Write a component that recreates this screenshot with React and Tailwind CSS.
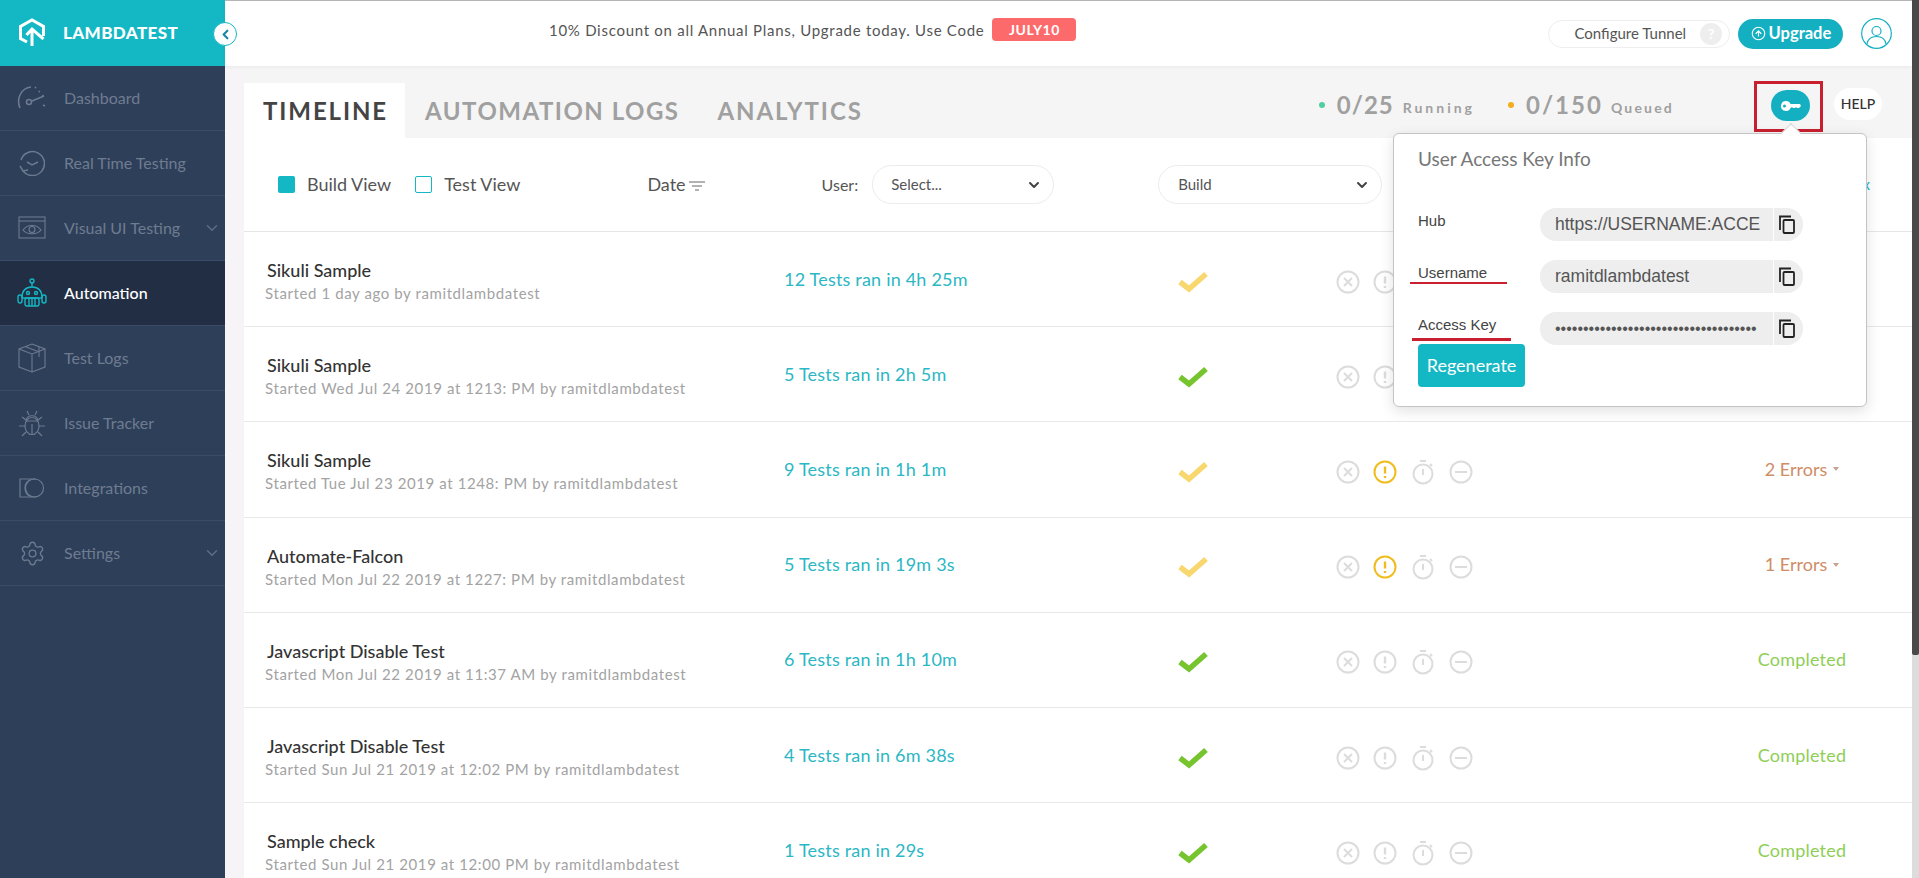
import React from 'react';
import { Settings, ChevronDown, ChevronLeft, CircleArrowUp } from 'lucide-react';

function Logo() {
  return (
    <svg width="28" height="30" viewBox="0 0 28 30" fill="none" stroke="white" strokeWidth="3">
      <path d="M9 24 L2.5 20.5 V8.5 L14 2 L25.5 8.5 V18" />
      <path d="M14 28 V12 M8.5 17 L14 11 L25.5 21" />
    </svg>
  );
}

function GaugeIcon() {
  return (
    <svg width="32" height="26" viewBox="0 0 32 26" fill="none" stroke="#6d7a8e" strokeWidth="1.6">
      <path d="M4 23 C0 14 5 3 15 2" />
      <path d="M19 2 L30 14" strokeDasharray="1.5 4" />
      <circle cx="13" cy="17" r="2.5" />
      <path d="M16 16 L28 11 M27 20 L29 21" />
    </svg>
  );
}

function ClockIcon() {
  return (
    <svg width="26" height="26" viewBox="0 0 26 26" fill="none" stroke="#6d7a8e" strokeWidth="1.5">
      <path d="M2 10 A12 12 0 1 1 4 21" />
      <path d="M1 16 L4 21 L9 20" />
      <path d="M8 12 L13 15 L19 12" />
    </svg>
  );
}

function EyeWindowIcon() {
  return (
    <svg width="28" height="24" viewBox="0 0 28 24" fill="none" stroke="#6d7a8e" strokeWidth="1.1">
      <rect x="1" y="1" width="26" height="21" />
      <path d="M1 5 H27" />
      <path d="M5 14 C9 8 19 8 23 14 C19 19 9 19 5 14 Z" />
      <circle cx="14" cy="13.5" r="3" />
    </svg>
  );
}

function RobotIcon() {
  return (
    <svg width="30" height="30" viewBox="0 0 30 30" fill="none" stroke="#14b8c4" strokeWidth="1.4">
      <circle cx="15" cy="3" r="2" />
      <path d="M15 5 V9" />
      <path d="M5 20 C5 12 9 9 15 9 C21 9 25 12 25 20" />
      <path d="M5 20 H25" />
      <circle cx="11" cy="15" r="1.5" />
      <circle cx="19" cy="15" r="1.5" />
      <rect x="8" y="20" width="14" height="8" rx="2" />
      <path d="M12 20 V28 M15 20 V28 M18 20 V28" />
      <rect x="1" y="17" width="4" height="8" rx="2" />
      <rect x="25" y="17" width="4" height="8" rx="2" />
    </svg>
  );
}

function BoxIcon() {
  return (
    <svg width="28" height="30" viewBox="0 0 28 30" fill="none" stroke="#6d7a8e" strokeWidth="1.1">
      <path d="M14 1 L27 6 V24 L14 29 L1 24 V6 Z" />
      <path d="M1 6 L14 11 L27 6 M14 11 V29" />
      <path d="M7 3.5 L20 8.5 M21 4 V14" />
    </svg>
  );
}

function BugIcon() {
  return (
    <svg width="28" height="28" viewBox="0 0 28 28" fill="none" stroke="#6d7a8e" strokeWidth="1.2">
      <ellipse cx="14" cy="17" rx="7" ry="8.5" />
      <path d="M8 12 C9 5 19 5 20 12 Z" />
      <path d="M14 15 V25 M11 6 L9 2 M17 6 L19 2" />
      <path d="M7 17 H1 M21 17 H27 M8 11 L4 8 M20 11 L24 8 M8 23 L4 27 M20 23 L24 27" />
    </svg>
  );
}

function CardsIcon() {
  return (
    <svg width="26" height="20" viewBox="0 0 26 20" fill="none" stroke="#6d7a8e" strokeWidth="1.2">
      <path d="M17 1 H1 V19 H17" />
      <circle cx="15.5" cy="10" r="9" />
      <path d="M12 1.5 A9 9 0 0 0 12 18.5" />
    </svg>
  );
}

const navItems = [
  { label: 'Dashboard', icon: <GaugeIcon /> },
  { label: 'Real Time Testing', icon: <ClockIcon /> },
  { label: 'Visual UI Testing', icon: <EyeWindowIcon />, arrow: true },
  { label: 'Automation', icon: <RobotIcon />, active: true },
  { label: 'Test Logs', icon: <BoxIcon /> },
  { label: 'Issue Tracker', icon: <BugIcon /> },
  { label: 'Integrations', icon: <CardsIcon /> },
  { label: 'Settings', icon: <Settings size={27} color="#6d7a8e" strokeWidth={1.2} />, arrow: true },
];

const rows = [
  { name: 'Sikuli Sample', sub: 'Started 1 day ago by ramitdlambdatest', tests: '12 Tests ran in 4h 25m', warn: true, status: '' },
  { name: 'Sikuli Sample', sub: 'Started Wed Jul 24 2019 at 1213: PM by ramitdlambdatest', tests: '5 Tests ran in 2h 5m', status: '' },
  { name: 'Sikuli Sample', sub: 'Started Tue Jul 23 2019 at 1248: PM by ramitdlambdatest', tests: '9 Tests ran in 1h 1m', warn: true, status: '2 Errors' },
  { name: 'Automate-Falcon', sub: 'Started Mon Jul 22 2019 at 1227: PM by ramitdlambdatest', tests: '5 Tests ran in 19m 3s', warn: true, status: '1 Errors' },
  { name: 'Javascript Disable Test', sub: 'Started Mon Jul 22 2019 at 11:37 AM by ramitdlambdatest', tests: '6 Tests ran in 1h 10m', status: 'Completed' },
  { name: 'Javascript Disable Test', sub: 'Started Sun Jul 21 2019 at 12:02 PM by ramitdlambdatest', tests: '4 Tests ran in 6m 38s', status: 'Completed' },
  { name: 'Sample check', sub: 'Started Sun Jul 21 2019 at 12:00 PM by ramitdlambdatest', tests: '1 Tests ran in 29s', status: 'Completed' },
];

function CheckMark({ warn }) {
  return (
    <svg width="30" height="22" viewBox="0 0 30 22" fill="none" stroke={warn ? '#f8d76e' : '#76c52f'} strokeWidth="5.5">
      <path d="M2 11 L11 18 L28 3" />
    </svg>
  );
}

function StateIcons({ warn }) {
  const gray = '#dcdcdc';
  const ex = warn ? '#efbd1f' : gray;
  return (
    <div className="flex items-center">
      <svg width="24" height="24" viewBox="0 0 24 24" fill="none" stroke={gray} strokeWidth="2">
        <circle cx="12" cy="12" r="10.5" />
        <path d="M8 8 L16 16 M16 8 L8 16" />
      </svg>
      <svg className="ml-[13px]" width="24" height="24" viewBox="0 0 24 24" fill="none" stroke={ex} strokeWidth="2">
        <circle cx="12" cy="12" r="10.5" />
        <path d="M12 6.5 V13.5 M12 16 V18" strokeWidth="2.4" />
      </svg>
      <svg className="ml-[15px]" width="22" height="26" viewBox="0 0 22 26" fill="none" stroke={gray} strokeWidth="2">
        <circle cx="11" cy="15" r="9.5" />
        <path d="M11 10 V16 M8 2 H14 M18 5 L20 7" />
      </svg>
      <svg className="ml-[15px]" width="24" height="24" viewBox="0 0 24 24" fill="none" stroke={gray} strokeWidth="2">
        <circle cx="12" cy="12" r="10.5" />
        <path d="M6 12 H18" />
      </svg>
    </div>
  );
}

function Status({ text }) {
  if (text === 'Completed') {
    return <span className="text-[#8fce57] text-[18px] tracking-[0.2px]">Completed</span>;
  }
  if (!text) return null;
  return (
    <span className="text-[#cf8d66] text-[18px] inline-flex items-center">
      {text}
      <span className="ml-[6px] border-x-[3.5px] border-t-[4px] border-x-transparent border-t-[#c9a38d]" />
    </span>
  );
}

function CopyIcon() {
  return (
    <svg width="16" height="19" viewBox="0 0 16 19" fill="none" stroke="#222" strokeWidth="1.8">
      <path d="M1 15 V1.5 H12" />
      <rect x="4.5" y="5" width="10.5" height="13" rx="1" />
    </svg>
  );
}

function KeyField({ label, value, dots, underline }) {
  return (
    <div className="flex items-center h-[33px] mb-[19px] relative">
      <span className="w-[122px] text-[15px] leading-[18px] text-[#444] mb-[7px]">{label}</span>
      {underline && <span className={underline} />}
      <div className="w-[263px] h-[33px] rounded-[16px] bg-[#eeeeee] flex items-center overflow-hidden">
        <span className={dots ? 'w-[233px] pl-[15px] text-[#555] text-[16px] whitespace-nowrap' : 'w-[233px] pl-[15px] text-[#555] text-[17.5px] whitespace-nowrap'}>{value}</span>
        <span className="h-full w-[30px] border-l border-white flex items-center pl-[5px]"><CopyIcon /></span>
      </div>
    </div>
  );
}

export default function App() {
  return (
    <div className="w-[1919px] h-[878px] overflow-hidden flex font-['Lato',sans-serif] bg-[#f6f4f7]">
      {/* Sidebar */}
      <aside className="w-[225px] shrink-0 bg-[#2e3f5a] h-full">
        <div className="h-[66px] bg-[#14b8c4] flex items-center pl-[18px]">
          <Logo />
          <span className="ml-[17px] text-white font-black text-[17px] tracking-[0.4px]">LAMBDATEST</span>
        </div>
        {navItems.map((item, index) => (
          <div
            key={index}
            className={item.active ? 'h-[65px] flex items-center bg-[#222e44] border-b border-[#3c4c66]' : 'h-[65px] flex items-center border-b border-[#3c4c66]'}
          >
            <span className="w-[64px] flex justify-center">{item.icon}</span>
            <span className={item.active ? 'text-white text-[16px] font-medium' : 'text-[#6f7c90] text-[16px]'}>{item.label}</span>
            {item.arrow && <ChevronDown size={18} color="#5f6d84" className="ml-auto mr-[4px]" />}
          </div>
        ))}
      </aside>

      {/* Page */}
      <div className="flex-1 flex flex-col relative min-w-0">
        <header className="h-[66px] shrink-0 bg-white border-t border-[#b5b5b5] flex items-center shadow-[0_1px_4px_rgba(0,0,0,0.05)] z-10">
          <span className="ml-[324px] text-[15px] text-[#555] tracking-[0.72px] mb-[6px]">10% Discount on all Annual Plans, Upgrade today. Use Code</span>
          <span className="ml-[8px] w-[84px] h-[23px] rounded-[4px] bg-[#fd6a6c] text-white text-[14px] font-bold flex items-center justify-center tracking-[0.5px] mb-[9px]">JULY10</span>
          <div className="ml-[472px] w-[182px] h-[28px] rounded-full border border-[#eeeeee] flex items-center pl-[25px] text-[15px] text-[#555]">
            Configure Tunnel
            <span className="ml-[14px] w-[22px] h-[22px] rounded-full bg-[#eeeeee] text-white font-bold text-[14px] flex items-center justify-center">?</span>
          </div>
          <button className="ml-[8px] w-[105px] h-[30px] rounded-full bg-[#14b0c2] text-white font-bold text-[16.5px] flex items-center justify-center gap-[3px]">
            <CircleArrowUp size={15} strokeWidth={1.8} />
            Upgrade
          </button>
          <svg className="ml-[18px]" width="31" height="31" viewBox="0 0 31 31" fill="none" stroke="#14b0c2" strokeWidth="1.2">
            <circle cx="15.5" cy="15.5" r="14.8" />
            <circle cx="15.5" cy="13" r="4.5" />
            <path d="M6 26 C7 20 11 18.5 15.5 18.5 C20 18.5 24 20 25 26" />
          </svg>
        </header>

        <div className="flex-1 ml-[19px] flex flex-col min-h-0">
          {/* Tabs */}
          <div className="h-[72px] shrink-0 bg-[#f5f5f5] flex items-end relative">
            <div className="w-[161px] h-[55px] bg-white flex items-center pl-[19px] text-[24px] font-bold tracking-[1.9px] text-[#444]">TIMELINE</div>
            <div className="h-[55px] flex items-center ml-[20px] text-[24px] font-bold tracking-[1.5px] text-[#a0a0a0]">AUTOMATION LOGS</div>
            <div className="h-[55px] flex items-center ml-[38px] text-[24px] font-bold tracking-[1.9px] text-[#a0a0a0]">ANALYTICS</div>
            <div className="h-[55px] flex items-center ml-auto pr-[30px] text-[#a0a0a0] pb-[12px]">
              <span className="w-[6px] h-[6px] rounded-full bg-[#4fcf9f]" />
              <span className="ml-[12px] text-[24px] font-bold tracking-[1px]">0/25</span>
              <span className="ml-[9px] text-[14px] font-bold tracking-[3px] mt-[6px]">Running</span>
              <span className="ml-[33px] w-[6px] h-[6px] rounded-full bg-[#f2ae1c]" />
              <span className="ml-[12px] text-[24px] font-bold tracking-[2px]">0/150</span>
              <span className="ml-[8px] text-[14px] font-bold tracking-[2.2px] mt-[6px]">Queued</span>
              <div className="relative ml-[97px] mt-[2px]">
                <div className="w-[39px] h-[31px] rounded-full bg-[#14b0c2] flex items-center justify-center">
                  <svg width="20" height="10" viewBox="0 0 20 10" fill="white">
                    <path fillRule="evenodd" d="M5 0 A5 5 0 0 1 9.6 3 H19 L20 5 L18 7 H16 L15 6 L14 7 H12 L11 6 L9.6 7 A5 5 0 1 1 5 0 Z M3.5 3.5 A1.5 1.5 0 1 0 3.5 6.5 A1.5 1.5 0 1 0 3.5 3.5 Z" />
                  </svg>
                </div>
              </div>
              <div className="ml-[24px] mt-[-2px] w-[48px] h-[32px] rounded-full bg-white flex items-center justify-center text-[14px] font-medium text-[#333]">HELP</div>
            </div>
          </div>

          {/* Filters + list */}
          <div className="flex-1 bg-white mr-0 min-h-0">
            <div className="h-[94px] border-b border-[#e6e6e6] flex items-center text-[#555]">
              <span className="ml-[34px] w-[17px] h-[17px] rounded-[2px] bg-[#14b8c4]" />
              <span className="ml-[12px] text-[18px]">Build View</span>
              <span className="ml-[24px] w-[17px] h-[17px] rounded-[2px] border border-[#14b8c4]" />
              <span className="ml-[12px] text-[18px]">Test View</span>
              <span className="ml-[127px] text-[18px]">Date</span>
              <svg className="ml-[3px] mt-[3px]" width="16" height="12" viewBox="0 0 16 12" stroke="#999" strokeWidth="1.4">
                <path d="M0 2 H16 M3 6 H13 M6 10 H10" />
              </svg>
              <span className="ml-[117px] text-[16px]">User:</span>
              <div className="ml-[14px] w-[182px] h-[39px] rounded-full border border-[#ececec] flex items-center justify-between pl-[18px] pr-[11px] text-[15px] text-[#555]">
                Select...
                <ChevronDown size={16} strokeWidth={3} color="#444" />
              </div>
              <div className="ml-[104px] w-[224px] h-[39px] rounded-full border border-[#ececec] flex items-center justify-between pl-[19px] pr-[11px] text-[15px] text-[#555]">
                Build
                <ChevronDown size={16} strokeWidth={3} color="#444" />
              </div>
              <span className="ml-auto mr-[42px] text-[15px] text-[#14b8c4]">x</span>
            </div>

            {rows.map((row, index) => (
              <div key={index} className="h-[95.2px] border-b border-[#e8e8e8] pl-[23px] grid grid-cols-[517px_394px_158px_376px_180px] items-center">
                <div className="pt-[5px]">
                  <div className="text-[18px] leading-[22px] font-medium text-[#333] mb-[2px]">{row.name}</div>
                  <div className="text-[15px] leading-[21px] tracking-[0.6px] text-[#a3a3a3] -ml-[2px]">{row.sub}</div>
                </div>
                <div className="text-[18px] text-[#2bb7c4] tracking-[0.2px]">{row.tests}</div>
                <div className="pt-[5px]"><CheckMark warn={row.warn} /></div>
                <div className="pt-[5px]"><StateIcons warn={row.status.includes('Errors')} /></div>
                <div className="text-center"><Status text={row.status} /></div>
              </div>
            ))}
          </div>
        </div>

        {/* Access key popover */}
        <div className="absolute left-[1168px] top-[133px] w-[474px] h-[274px] rounded-[6px] bg-white border border-[#c4c4c4] shadow-[0_4px_14px_rgba(0,0,0,0.12)] pl-[24px] font-['Liberation_Sans',sans-serif] z-20">
          <div className="absolute left-[390px] -top-[8px] w-[14px] h-[14px] rotate-45 bg-white border-l border-t border-[#d5d5d5]" />
          <div className="font-['Lato',sans-serif] text-[19px] text-[#777] mt-[12px] mb-[36px] leading-[26px] relative">User Access Key Info</div>
          <KeyField label="Hub" value="https://USERNAME:ACCE" />
          <KeyField label="Username" value="ramitdlambdatest" underline="absolute left-[-8px] top-[22px] w-[97px] h-[2px] bg-[#c8202f]" />
          <KeyField label="Access Key" dots value="••••••••••••••••••••••••••••••••••••" underline="absolute left-[-6px] top-[26px] w-[99px] h-[3px] bg-[#c8202f]" />
          <button className="block -mt-[20px] w-[107px] h-[43px] rounded-[4px] bg-[#14b8c4] text-white text-[18px] font-['Lato',sans-serif]">Regenerate</button>
        </div>

        {/* Red highlight round the key button */}
        <div className="absolute left-[1529px] top-[81px] w-[69px] h-[51px] border-[3px] border-[#c8202f] z-10" />

        {/* Collapse toggle */}
        <div className="absolute -left-[12px] top-[22px] w-[24px] h-[24px] rounded-full bg-white border border-[#14b8c4] flex items-center justify-center z-20">
          <ChevronLeft size={15} strokeWidth={3.5} color="#1a86a8" />
        </div>
      </div>

      {/* Scrollbar */}
      <div className="w-[7px] shrink-0 bg-[#dcdcdc]">
        <div className="h-[655px] bg-[#4a4a4a] rounded-b-[2px]" />
      </div>
    </div>
  );
}
